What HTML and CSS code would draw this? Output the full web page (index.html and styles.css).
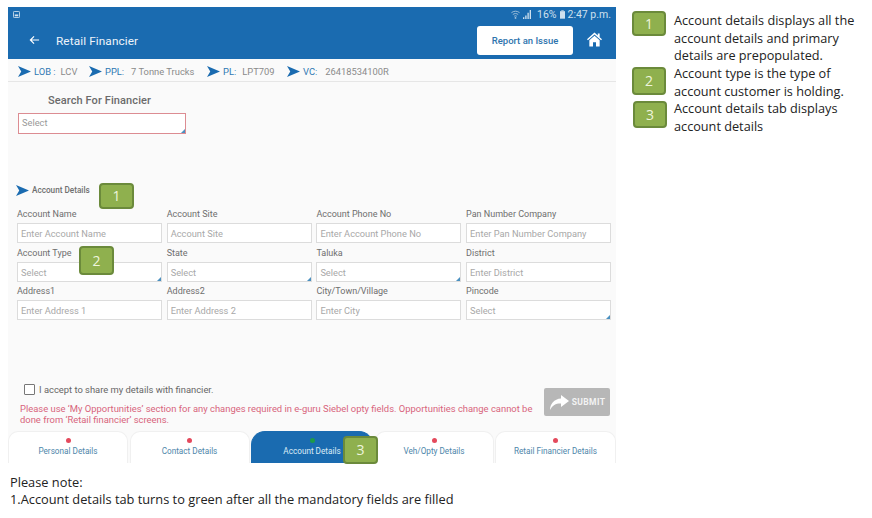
FILE: index.html
```html
<!DOCTYPE html>
<html lang="en">
<head>
<meta charset="utf-8">
<title>Retail Financier</title>
<link rel="stylesheet" href="styles.css">
</head>
<body>
<div class="page">
  <div class="top">
    <div class="phone">
      <div class="appbar">
        <div class="status">
          <svg class="status-left" viewBox="0 0 8 8"><rect x="0.5" y="0.5" width="7" height="7" rx="1" fill="none" stroke="#d5e4f0"/><rect x="2" y="4" width="4" height="2" fill="#d5e4f0"/></svg>
          <div class="status-right">
            <svg class="wifi" viewBox="0 0 10 10"><path d="M0.5 3C3 .8 7 .8 9.5 3M2 5C3.8 3.6 6.2 3.6 8 5M3.5 7C4.4 6.3 5.6 6.3 6.5 7" fill="none" stroke="#a9c6de" stroke-width="1"/><circle cx="5" cy="8.8" r="1" fill="#a9c6de"/></svg>
            <svg class="signal" viewBox="0 0 9 10"><path d="M0 10V8H1.5V10ZM2.5 10V6H4V10ZM5 10V3H6.5V10ZM7.5 10V0H9V10Z" fill="#cfe0ee"/></svg>
            <span>16%</span>
            <svg class="battery" viewBox="0 0 6 10"><rect x="1.5" y="0" width="3" height="1" fill="#cfe0ee"/><rect x="0" y="1" width="6" height="9" fill="#cfe0ee"/></svg>
            <span>2:47 p.m.</span>
          </div>
        </div>
        <div class="titlebar">
          <svg class="back" viewBox="0 0 12 10"><path d="M11 5H1.5M5.5 1L1.5 5L5.5 9" fill="none" stroke="#fff" stroke-width="1.3"/></svg>
          <span class="title">Retail Financier</span>
          <button class="report">Report an Issue</button>
          <svg class="home" viewBox="0 0 16 15"><path d="M8 0L0 7.2L1 8.3L8 2.2L15 8.3L16 7.2L13.5 5V1.2H11.5V3.2Z" fill="#fff"/><path d="M8 3.6L2.5 8.4V15H6.4V10.4H9.6V15H13.5V8.4Z" fill="#fff"/></svg>
        </div>
      </div>

      <div class="crumbs">
        <div class="crumb crumb-lob"><svg class="chev" viewBox="0 0 14 12"><path d="M0 0L14 6L0 12L3.5 6Z"/></svg><b>LOB :</b><span>LCV</span></div>
        <div class="crumb crumb-ppl"><svg class="chev" viewBox="0 0 14 12"><path d="M0 0L14 6L0 12L3.5 6Z"/></svg><b>PPL:</b><span>7 Tonne Trucks</span></div>
        <div class="crumb crumb-pl"><svg class="chev" viewBox="0 0 14 12"><path d="M0 0L14 6L0 12L3.5 6Z"/></svg><b>PL:</b><span>LPT709</span></div>
        <div class="crumb crumb-vc"><svg class="chev" viewBox="0 0 14 12"><path d="M0 0L14 6L0 12L3.5 6Z"/></svg><b>VC:</b><span>26418534100R</span></div>
      </div>

      <div class="content">
        <h2 class="search-title">Search For Financier</h2>
        <div class="box search-box select">Select</div>

        <div class="section-head"><svg class="chev" viewBox="0 0 14 12"><path d="M0 0L14 6L0 12L3.5 6Z"/></svg><span>Account Details</span></div>

        <div class="form">
          <div class="field"><label>Account Name</label><div class="box">Enter Account Name</div></div>
          <div class="field"><label>Account Site</label><div class="box">Account Site</div></div>
          <div class="field"><label>Account Phone No</label><div class="box">Enter Account Phone No</div></div>
          <div class="field"><label>Pan Number Company</label><div class="box">Enter Pan Number Company</div></div>
          <div class="field"><label>Account Type</label><div class="box select">Select</div></div>
          <div class="field"><label>State</label><div class="box select">Select</div></div>
          <div class="field"><label>Taluka</label><div class="box select">Select</div></div>
          <div class="field"><label>District</label><div class="box">Enter District</div></div>
          <div class="field"><label>Address1</label><div class="box">Enter Address 1</div></div>
          <div class="field"><label>Address2</label><div class="box">Enter Address 2</div></div>
          <div class="field"><label>City/Town/Village</label><div class="box">Enter City</div></div>
          <div class="field"><label>Pincode</label><div class="box select">Select</div></div>
        </div>

        <div class="footer">
          <div class="footer-text">
            <div class="accept"><span class="checkbox"></span><span>I accept to share my details with financier.</span></div>
            <p class="warning">Please use ‘My Opportunities’ section for any changes required in e-guru Siebel opty fields. Opportunities change cannot be done from ‘Retail financier’ screens.</p>
          </div>
          <button class="submit">
            <svg class="share" viewBox="0 0 20 15"><path d="M12 0L20 6L12 12V8.4C7 8.2 3.5 10 1 15C1 9 5 3.8 12 3.4Z" fill="#fff"/></svg>
            <span>SUBMIT</span>
          </button>
        </div>
      </div>

      <div class="tabs">
        <div class="tab"><i class="dot"></i><span>Personal Details</span></div>
        <div class="tab"><i class="dot"></i><span>Contact Details</span></div>
        <div class="tab active"><i class="dot green"></i><span>Account Details</span></div>
        <div class="tab"><i class="dot"></i><span>Veh/Opty Details</span></div>
        <div class="tab"><i class="dot"></i><span>Retail Financier Details</span></div>
      </div>

      <div class="badge callout-1">1</div>
      <div class="badge callout-2">2</div>
      <div class="badge callout-3">3</div>
    </div>

    <div class="legend">
      <div class="legend-row row-1"><div class="badge">1</div><p>Account details displays all the account details and primary details are prepopulated.</p></div>
      <div class="legend-row row-2"><div class="badge">2</div><p>Account type is the type of account customer is holding.</p></div>
      <div class="legend-row row-3"><div class="badge">3</div><p>Account details tab displays account details</p></div>
    </div>
  </div>

  <div class="note">
    <p>Please note:</p>
    <p>1.Account details tab turns to green after all the mandatory fields are filled</p>
  </div>
</div>
</body>
</html>
```
FILE: styles.css
```css
* { box-sizing: border-box; }
html, body { margin: 0; padding: 0; background: #fff; }
body { width: 872px; height: 518px; overflow: hidden; font-family: Roboto, sans-serif; }
.page { padding: 7px 0 0 8px; }
.top { display: flex; align-items: flex-start; }

.phone { position: relative; width: 608px; height: 456px; background: #fafafa; display: flex; flex-direction: column; flex: none; }

.appbar { height: 52px; background: #1a6bb0; flex: none; color: #fff; }
.status { height: 15px; display: flex; align-items: center; justify-content: space-between; padding: 0 5px 0 5px; }
.status-left { width: 7px; height: 7px; }
.status-right { display: flex; align-items: center; gap: 3px; color: #cfe0ee; font-size: 10.5px; }
.wifi { width: 9px; height: 9px; }
.signal { width: 8px; height: 9px; margin-right: 3px; }
.battery { width: 5px; height: 9px; }
.titlebar { height: 37px; display: flex; align-items: center; padding-left: 21px; }
.back { width: 11px; height: 10px; margin-top: -1px; }
.title { margin-left: 16px; font-size: 11.8px; color: #eef4fa; font-weight: 400; letter-spacing: .1px; margin-top: 1px; width: 421px; white-space: nowrap; }
.report { width: 96px; height: 29px; border: 0; border-radius: 3px; background: #fff; color: #2e74ad; font: 500 9.5px Roboto, sans-serif; padding: 0; margin-top: -1px; }
.home { width: 15px; height: 15px; margin-left: 14px; margin-top: -2px; }

.crumbs { height: 22px; flex: none; display: flex; align-items: center; padding: 1px 0 0 10px; border-bottom: 1px solid #e6e6e6; margin-top: 1px; font-size: 9.35px; color: #8a8a8a; }
.crumb { display: flex; align-items: center; white-space: nowrap; }
.crumb b { font-weight: 400; color: #2f78b3; margin-left: 3px; }
.crumb-lob { width: 71px; }
.crumb-lob span { margin-left: 5px; }
.crumb-ppl { width: 118px; }
.crumb-ppl span { margin-left: 7px; }
.crumb-pl { width: 80px; }
.crumb-pl span { margin-left: 6px; }
.crumb-vc span { margin-left: 8px; }
.chev { width: 13px; height: 13px; fill: #1a6bb0; flex: none; }

.content { flex: 1; display: flex; flex-direction: column; min-height: 0; padding: 0 5px 0 9px; }
.search-title { margin: 12px 0 0 31px; font: 500 11px/14px Roboto, sans-serif; color: #6b6b6b; letter-spacing: .1px; }
.box { position: relative; height: 20px; background: #fff; border: 1px solid #dcdcdc; font-size: 9.25px; line-height: 19px; color: #a8a8a8; padding-left: 3px; white-space: nowrap; }
.select::after { content: ""; position: absolute; right: 0; bottom: 0; border-style: solid; border-width: 0 0 4px 4px; border-color: transparent transparent #4a90c0 transparent; }
.search-box { width: 168px; height: 21px; margin: 5px 0 0 1px; border-color: #dc8c92; color: #999; padding-left: 3px; line-height: 17px; }

.section-head { display: flex; align-items: center; margin: 49px 0 0 -1px; height: 14px; font-size: 8.2px; font-weight: 500; color: #6f6f6f; }
.section-head .chev { margin-right: 3px; height: 13px; }

.form { display: grid; grid-template-columns: repeat(4, 145px); column-gap: 4.7px; row-gap: 0; margin-top: 11px; }
.field { height: 38.7px; }
.field label { display: block; font-size: 9px; line-height: 12px; color: #6e6e6e; }
.field .box { padding-left: 3px; margin-top: 3px; }

.footer { margin-top: auto; display: flex; align-items: flex-start; justify-content: space-between; padding: 0 1px 0 3px; height: 45px; }
.footer-text { width: 516px; }
.accept { display: flex; align-items: center; gap: 4px; height: 12px; padding-left: 4px; margin-top: -3px; font-size: 9.4px; color: #666; }
.checkbox { width: 11px; height: 11px; border: 1px solid #777; border-radius: 1px; background: #fff; flex: none; }
.warning { margin: 8px 0 0; font-size: 9.42px; line-height: 11px; color: #d8647c; }
.submit { width: 66px; height: 28px; margin-top: 2px; border: 0; border-radius: 2px; background: #b7b7b7; color: #f3f3f3; display: flex; align-items: center; justify-content: center; gap: 3px; padding: 0; font: 700 8.5px Roboto, sans-serif; letter-spacing: .4px; }
.share { width: 20px; height: 15px; }

.tabs { display: grid; grid-template-columns: 120px 120px 122px 119px 121px; column-gap: 1.5px; height: 32px; flex: none; }
.tab { background: #fff; border: 1px solid #f0f0f0; border-bottom: 0; border-radius: 10px 10px 0 0; display: flex; flex-direction: column; align-items: center; font-size: 8.2px; color: #4d86aa; padding-top: 6px; white-space: nowrap; }
.tab span { margin-top: 3px; line-height: 11px; }
.tab.active { background: #1a6bb0; border-color: #1a6bb0; color: #dcebf6; border-radius: 14px 14px 0 0; }
.dot { width: 5px; height: 5px; border-radius: 50%; background: #e4495c; }
.dot.green { background: #1d9a4a; }

.badge { width: 34px; height: 25px; background: #8fb04e; border: 2px solid #6b8a3b; border-radius: 4px; color: #eef5dc; font: 14px/21px "Open Sans", sans-serif; text-align: center; flex: none; }
.callout-1 { position: absolute; left: 91px; top: 176px; width: 35px; height: 26px; }
.callout-2 { position: absolute; left: 71px; top: 239px; width: 35px; height: 29px; line-height: 25px; }
.callout-3 { position: absolute; left: 335px; top: 429px; width: 35px; height: 28px; line-height: 24px; }

.legend { margin-left: 16px; width: 232px; padding-top: 4px; }
.legend-row { display: flex; align-items: flex-start; gap: 8px; }
.legend-row p { margin: 0; font: 12.7px/17.6px "Open Sans", sans-serif; color: #222; width: 190px; padding-top: 1px; }
.row-1 { height: 53px; }
.row-2 { height: 35px; }
.row-2 .badge { height: 28px; margin-top: 3px; line-height: 24px; }
.row-3 .badge { height: 27px; margin-left: 1px; margin-right: -1px; margin-top: 2px; line-height: 23px; }

.note { padding: 11px 0 0 2px; font: 12.8px/17px "Open Sans", sans-serif; color: #222; }
.note p { margin: 0; white-space: nowrap; }
```
